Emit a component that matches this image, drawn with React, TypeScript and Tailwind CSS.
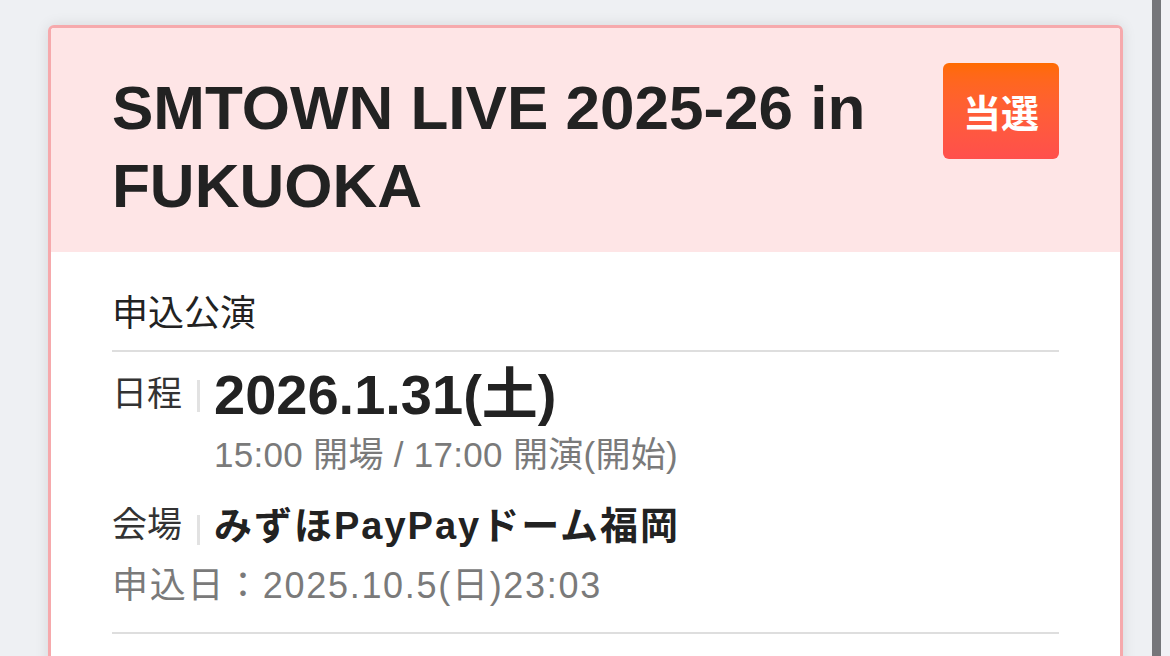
import React from "react";

const font = "font-['Liberation_Sans','Noto_Sans_CJK_JP',sans-serif]";

function Badge() {
  return (
    <div className="flex h-[96px] w-[116px] shrink-0 items-center justify-center rounded-[6px] bg-gradient-to-b from-[#ff6b00] to-[#ff4f4c]">
      <span className="font-['Noto_Sans_CJK_JP',sans-serif] text-[38px] font-bold leading-none text-white">
        当選
      </span>
    </div>
  );
}

function Separator({ top, height }: { top: string; height: string }) {
  return <div className={`w-[3px] shrink-0 bg-[#e2e2e2] ${top} ${height}`} />;
}

export default function App() {
  return (
    <div className={`flex h-[656px] w-full overflow-hidden bg-[#eef0f3] ${font}`}>
      <main className="flex-1 pl-[48px] pr-[29px] pt-[25px]">
        <article className="overflow-hidden rounded-[6px] border-[3px] border-[#f6a9ac] bg-white shadow-[0_0_14px_rgba(0,0,0,0.10)]">
          {/* header */}
          <header className="flex items-start justify-between gap-[40px] bg-[#fee5e6] px-[61px] pb-[27px] pt-[35px]">
            <h1 className="mt-[6px] text-[62px] font-bold leading-[78px] text-[#222]">
              SMTOWN LIVE 2025-26 in FUKUOKA
            </h1>
            <Badge />
          </header>

          {/* body */}
          <section className="px-[61px] pb-[80px] pt-[37px]">
            <p className="text-[36px] leading-[50px] text-[#222]">申込公演</p>
            <div className="mt-[11px] h-[2px] bg-[#dedede]" />

            {/* schedule */}
            <div className="mt-[12px] flex items-start">
              <span className="mt-[8px] w-[70px] shrink-0 text-[35px] leading-[44px] text-[#333]">日程</span>
              <Separator top="ml-[15px] mt-[16px]" height="h-[32px]" />
              <div className="ml-[14px] flex flex-col">
                <span className="text-[56px] font-bold leading-[62px] text-[#222]">2026.1.31(土)</span>
                <span className="mt-[7px] text-[35px] leading-[44px] tracking-[0.3px] text-[#7a7a7a]">
                  15:00 開場 / 17:00 開演(開始)
                </span>
              </div>
            </div>

            {/* venue */}
            <div className="mt-[26px] flex items-start">
              <span className="w-[70px] shrink-0 text-[35px] leading-[44px] text-[#333]">会場</span>
              <Separator top="ml-[15px] mt-[12px]" height="h-[30px]" />
              <span className="ml-[14px] mt-[1px] text-[38px] font-bold leading-[44px] tracking-[2px] text-[#222]">
                みずほPayPayドーム福岡
              </span>
            </div>

            <p className="mt-[16px] text-[36px] leading-[44px] tracking-[1.7px] text-[#7a7a7a]">
              申込日：2025.10.5(日)23:03
            </p>

            <div className="mt-[24px] h-[2px] bg-[#dedede]" />
          </section>
        </article>
      </main>

      {/* scroll track */}
      <div className="flex w-[18px] shrink-0">
        <div className="w-[9px] bg-[#75767a]" />
        <div className="w-[9px] bg-[#f1f1f5]" />
      </div>
    </div>
  );
}
